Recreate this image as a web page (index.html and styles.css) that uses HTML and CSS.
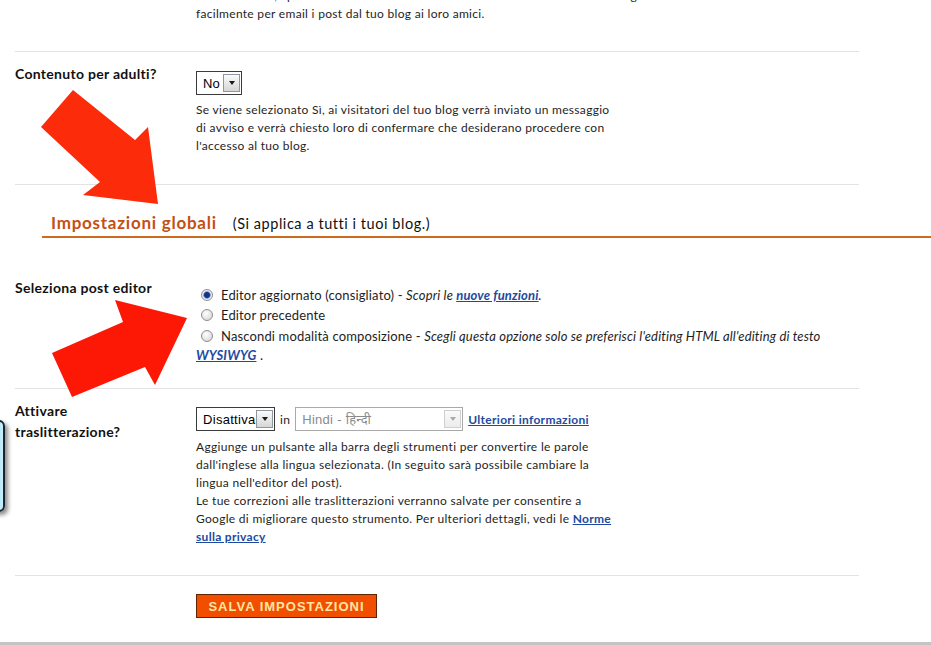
FILE: index.html
```html
<!DOCTYPE html>
<html lang="it">
<head>
<meta charset="utf-8">
<title>Impostazioni - Blogger</title>
<link rel="stylesheet" href="styles.css">
</head>
<body>
<div class="page">
  <div class="rows">
    <div class="row row-prev">
      <div class="label"></div>
      <div class="field">
        <p class="desc">Se selezioni Sì, i post mostreranno un link che consente ai visitatori di inviare agevolmente<br>facilmente per email i post dal tuo blog ai loro amici.</p>
      </div>
    </div>
    <div class="row row-adult">
      <div class="label">Contenuto per adulti?</div>
      <div class="field">
        <span class="select select-no"><span class="select-value">No</span><span class="select-btn"><span class="tri"></span></span></span>
        <p class="desc desc-gap">Se viene selezionato Sì, ai visitatori del tuo blog verrà inviato un messaggio<br>di avviso e verrà chiesto loro di confermare che desiderano procedere con<br>l'accesso al tuo blog.</p>
      </div>
    </div>
  </div>

  <div class="section-head">
    <h2>Impostazioni globali</h2>
    <span class="section-note">(Si applica a tutti i tuoi blog.)</span>
  </div>

  <div class="rows">
    <div class="row row-editor">
      <div class="label">Seleziona post editor</div>
      <div class="field options">
        <div class="opt"><span class="radio on"></span>Editor aggiornato (consigliato) - <em>Scopri le <a href="#" class="link">nuove funzioni</a>.</em></div>
        <div class="opt"><span class="radio"></span>Editor precedente</div>
        <div class="opt opt-wrap"><span class="radio"></span>Nascondi modalità composizione - <em>Scegli questa opzione solo se preferisci l'editing HTML all'editing di testo<br><a href="#" class="link">WYSIWYG</a></em> .</div>
      </div>
    </div>
    <div class="row row-translit">
      <div class="label">Attivare<br>traslitterazione?</div>
      <div class="field">
        <div class="control-line">
          <span class="select select-dis"><span class="select-value">Disattiva</span><span class="select-btn"><span class="tri"></span></span></span>
          <span class="in">in</span>
          <span class="select select-hindi disabled"><span class="select-value">Hindi - हिन्दी</span><span class="select-btn"><span class="tri"></span></span></span>
          <a href="#" class="link">Ulteriori informazioni</a>
        </div>
        <p class="desc desc-gap2">Aggiunge un pulsante alla barra degli strumenti per convertire le parole<br>dall'inglese alla lingua selezionata. (In seguito sarà possibile cambiare la<br>lingua nell'editor del post).<br>Le tue correzioni alle traslitterazioni verranno salvate per consentire a<br>Google di migliorare questo strumento. Per ulteriori dettagli, vedi le <a href="#" class="link">Norme<br>sulla privacy</a></p>
      </div>
    </div>
    <div class="row row-save">
      <div class="label"></div>
      <div class="field">
        <button class="save" type="button">SALVA IMPOSTAZIONI</button>
      </div>
    </div>
  </div>
</div>
<div class="bottom-bar"></div>

<div class="side-window"></div>

<svg class="arrows" width="931" height="645" viewBox="0 0 931 645" aria-hidden="true">
  <polygon fill="#fc2b0a" points="73,90 135,140 148,127 158,204 83,195 100,182 41,127"/>
  <polygon fill="#fd1705" points="187,318 155,385 145,367 72,397 52,353 123,322 115,300"/>
</svg>
</body>
</html>
```

FILE: styles.css
```css
* { box-sizing: border-box; }

html, body {
  margin: 0;
  padding: 0;
}

body {
  width: 931px;
  height: 645px;
  overflow: hidden;
  background: #fff;
  color: #1e1e1e;
  font-family: "Lato", "Liberation Sans", sans-serif;
  font-size: 12px;
}

.page {
  margin-top: -13px;
}

.rows {
  margin-left: 15px;
  width: 844px;
}

.row {
  display: grid;
  grid-template-columns: 181px 1fr;
  border-bottom: 1px solid #e3e3e3;
}

.row-prev { padding-bottom: 28px; }
.row-adult { padding: 14px 0 29px; }
.row-editor { padding: 42px 0 23px; }
.row-translit { padding: 11px 0 29px; }
.row-save { padding: 18px 0 24px; border-bottom: 0; }

.label {
  font-weight: bold;
  font-size: 14px;
  letter-spacing: 0.3px;
  line-height: 16px;
  color: #111;
}

.row-translit .label { line-height: 21px; }

.desc {
  margin: 0;
  line-height: 18px;
  letter-spacing: 0.3px;
  white-space: nowrap;
}

.desc-gap { margin-top: 6px; }
.desc-gap2 { margin-top: 7px; }

.link {
  color: #1d4a9f;
  font-weight: bold;
  text-decoration: underline;
}

/* selects */
.select {
  display: inline-flex;
  align-items: center;
  justify-content: space-between;
  height: 24px;
  border: 1px solid #3a3a3a;
  background: #fff;
  padding: 0 1px 0 6px;
  font-family: "Liberation Sans", Arial, sans-serif;
  font-size: 13px;
  color: #000;
  vertical-align: top;
}

.select-no { width: 46px; margin-top: 5px; }
.select-dis { width: 79px; }
.select-hindi { width: 168px; }

.select-btn {
  display: flex;
  align-items: center;
  justify-content: center;
  width: 17px;
  height: 18px;
  border: 1px solid #8e96a0;
  background: linear-gradient(#fbfbfb, #d6d6d6);
}

.tri {
  width: 0;
  height: 0;
  border-left: 3px solid transparent;
  border-right: 3px solid transparent;
  border-top: 4px solid #1a1a1a;
}

.select.disabled {
  border-color: #a9a9a9;
  color: #8a8a8a;
  font-family: "Liberation Sans", "Noto Sans", Arial, sans-serif;
}

.select.disabled .select-btn {
  border-color: #cfcfcf;
  background: linear-gradient(#fafafa, #ececec);
}

.select.disabled .tri { border-top-color: #a9a9a9; }

.control-line {
  display: flex;
  align-items: center;
  gap: 5px;
  margin-top: 7px;
  letter-spacing: 0.3px;
}

.in { font-size: 12px; }

/* radios */
.options { padding-top: 6px; }

.opt {
  font-size: 13px;
  letter-spacing: 0.15px;
  line-height: 19px;
  white-space: nowrap;
}

.opt + .opt { margin-top: 1px; }
.opt-wrap { margin-top: 2px !important; }

.radio {
  display: inline-block;
  width: 12px;
  height: 12px;
  margin: 0 8px 0 5px;
  border-radius: 50%;
  border: 1px solid #8f8f8f;
  background: radial-gradient(circle at 40% 35%, #ffffff, #d0d0d0);
  vertical-align: -1px;
}

.radio.on {
  background: radial-gradient(circle, #13357f 0 2.5px, #5f83c6 3.2px, #eef2fa 4.2px, #d6d9df 100%);
}

/* section heading */
.section-head {
  display: flex;
  align-items: baseline;
  gap: 16px;
  margin-left: 42px;
  padding: 28px 0 3px 9px;
  border-bottom: 2px solid #cf6a1c;
}

.section-head h2 {
  margin: 0;
  font-size: 17px;
  letter-spacing: 0.75px;
  line-height: 20px;
  font-weight: bold;
  color: #c6500f;
}

.section-note {
  font-size: 14.5px;
  letter-spacing: 0.55px;
  color: #111;
}

/* button */
.save {
  display: flex;
  align-items: center;
  justify-content: center;
  width: 181px;
  height: 24px;
  margin: 0;
  padding: 0;
  background: #f24e00;
  border: 1px solid #5c2400;
  color: #ffe6a3;
  font-family: "Liberation Sans", Arial, sans-serif;
  font-weight: bold;
  font-size: 13px;
  letter-spacing: 1px;
}

.bottom-bar {
  height: 4px;
  background: #c4c4c4;
}

/* overlays */
.side-window {
  position: absolute;
  left: -20px;
  top: 420px;
  width: 25px;
  height: 92px;
  border: 2px solid #1d2430;
  border-radius: 6px;
  background: linear-gradient(90deg, #8fd2ea, #c4eefa);
  box-shadow: 3px 3px 4px rgba(0, 0, 0, 0.45);
}

.arrows {
  position: absolute;
  left: 0;
  top: 0;
  pointer-events: none;
}
```
